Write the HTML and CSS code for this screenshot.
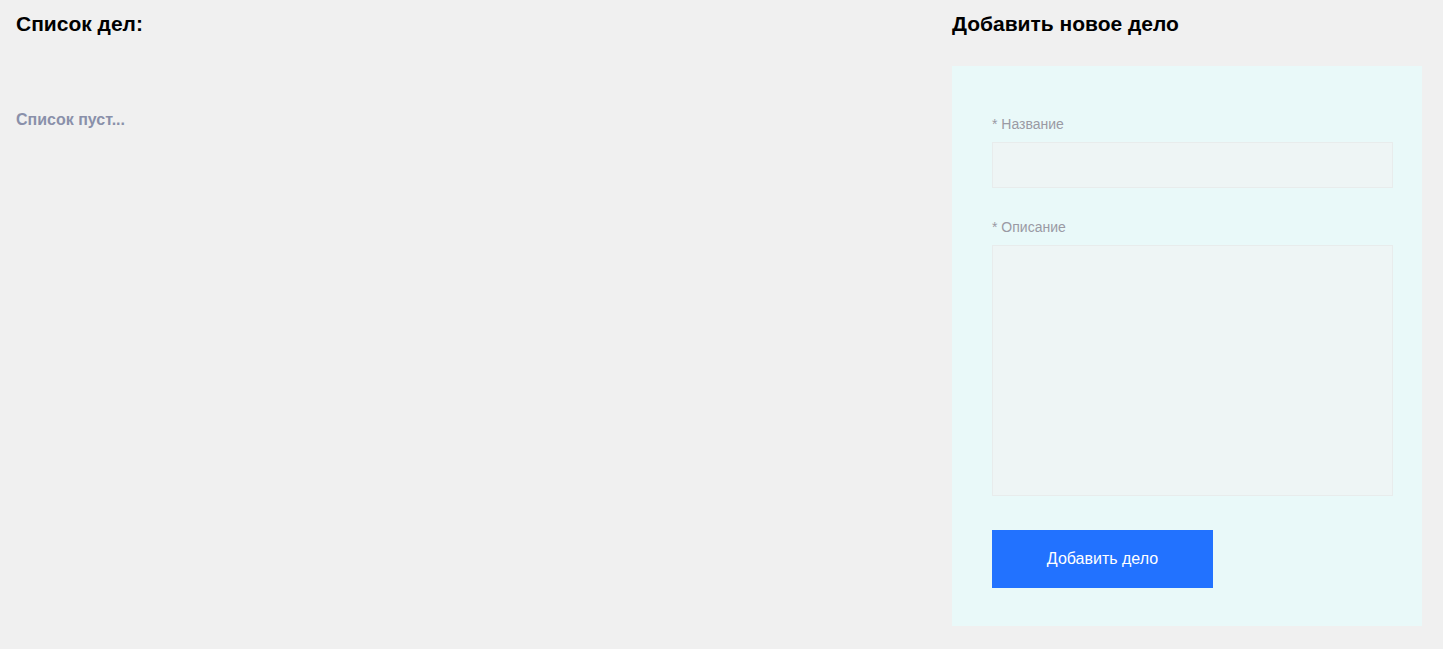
FILE: index.html
```html
<!DOCTYPE html>
<html lang="ru">
<head>
<meta charset="utf-8">
<title>Список дел</title>
<link rel="stylesheet" href="styles.css">
</head>
<body>
<div class="page">
  <section class="list-col">
    <h2 class="title">Список дел:</h2>
    <p class="empty">Список пуст...</p>
  </section>
  <section class="form-col">
    <h2 class="title">Добавить новое дело</h2>
    <form class="panel">
      <label class="label" for="name">* Название</label>
      <input class="field input" id="name" type="text">
      <label class="label label-2" for="desc">* Описание</label>
      <textarea class="field textarea" id="desc"></textarea>
      <button class="btn" type="button">Добавить дело</button>
    </form>
  </section>
</div>
</body>
</html>
```
FILE: styles.css
```css
html, body {
  margin: 0;
  padding: 0;
  background: #f0f0f0;
  font-family: "Liberation Sans", Arial, sans-serif;
}
.page {
  display: flex;
  padding: 10px 21px 0 16px;
  gap: 0;
}
.list-col {
  flex: 1;
}
.form-col {
  width: 470px;
  display: flex;
  flex-direction: column;
}
.title {
  margin: 0;
  font-size: 21px;
  line-height: 28px;
  font-weight: bold;
  color: #000;
}
.empty {
  margin: 73px 0 0;
  font-size: 16px;
  line-height: 18px;
  font-weight: bold;
  color: #8a90aa;
}
.panel {
  margin-top: 28px;
  background: #e9f9f9;
  padding: 50px 29px 38px 40px;
  display: flex;
  flex-direction: column;
  align-items: flex-start;
}
.label {
  font-size: 14px;
  line-height: 16px;
  color: #9a9aa4;
  margin-bottom: 10px;
}
.label-2 {
  margin-top: 31px;
}
.field {
  box-sizing: border-box;
  width: 100%;
  background: #eef5f5;
  border: 1px solid #e8ecec;
  margin: 0;
  padding: 0;
  font-family: inherit;
  outline: none;
}
.input {
  height: 46px;
}
.textarea {
  height: 251px;
  resize: none;
  display: block;
}
.btn {
  margin-top: 34px;
  width: 221px;
  height: 58px;
  border: none;
  background: #2272ff;
  color: #fff;
  font-family: inherit;
  font-size: 16px;
  padding: 0;
}
```
